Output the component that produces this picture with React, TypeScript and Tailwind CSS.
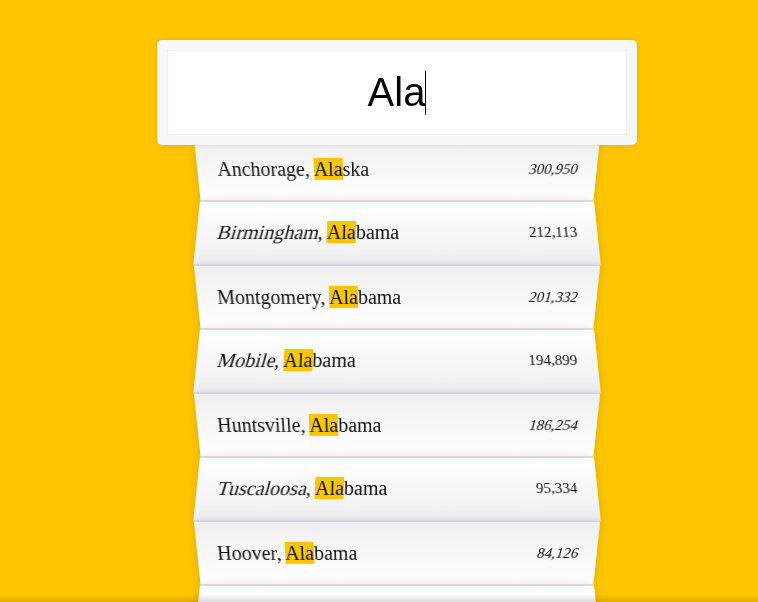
const cities = [
  { city: "Anchorage", state: "Alaska", pop: "300,950" },
  { city: "Birmingham", state: "Alabama", pop: "212,113" },
  { city: "Montgomery", state: "Alabama", pop: "201,332" },
  { city: "Mobile", state: "Alabama", pop: "194,899" },
  { city: "Huntsville", state: "Alabama", pop: "186,254" },
  { city: "Tuscaloosa", state: "Alabama", pop: "95,334" },
  { city: "Hoover", state: "Alabama", pop: "84,126" },
  { city: "Dothan", state: "Alabama", pop: "65,496" },
];

const query = "Ala";

function Highlighted({ text }: { text: string }) {
  const i = text.toLowerCase().indexOf(query.toLowerCase());
  if (i < 0) return <>{text}</>;
  return (
    <>
      {text.slice(0, i)}
      <span className="bg-[#ffc600]">{text.slice(i, i + query.length)}</span>
      {text.slice(i + query.length)}
    </>
  );
}

export default function App() {
  return (
    <div className="relative min-h-screen overflow-hidden bg-[#ffc600] pl-[36px] font-['Liberation_Serif',serif] text-[20px]">
      <form className="mx-auto max-w-[400px] pt-[30px]">
        <div className="relative top-[10px] left-[-10%] z-[2] flex w-[120%] items-center justify-center rounded-[5px] border-[10px] border-[#f7f7f7] bg-white p-5 font-['Liberation_Sans',Arial,sans-serif] text-[40px] leading-[45px] text-black shadow-[0_0_5px_rgba(0,0,0,0.12),inset_0_0_2px_rgba(0,0,0,0.19)]">
          <span>{query}</span>
          <span className="h-[44px] w-px bg-black" />
        </div>
        <ul className="relative m-0 list-none p-0">
          {cities.map((c, i) => {
            const odd = i % 2 === 0;
            return (
              <li
                key={c.city}
                className={
                  odd
                    ? "flex justify-between border-b border-[#d8d8d8] bg-linear-to-t from-white to-[#efefef] p-5 leading-[23px] text-[#111] shadow-[0_0_10px_rgba(0,0,0,0.14)] [transform:perspective(100px)_rotateX(-3deg)_translateY(3px)]"
                    : "flex justify-between border-b border-[#d8d8d8] bg-linear-to-b from-white to-[#efefef] p-5 leading-[23px] text-[#111] shadow-[0_0_10px_rgba(0,0,0,0.14)] [transform:perspective(100px)_rotateX(3deg)_translateY(2px)_scale(1.001)]"
                }
              >
                <span>
                  <span className={odd ? "" : "inline-block origin-[0_78%] [transform:skewX(-12deg)]"}>
                    <Highlighted text={c.city} />
                  </span>
                  , <Highlighted text={c.state} />
                </span>
                <span
                  className={
                    odd
                      ? "inline-block origin-[0_78%] self-start text-[15px] [transform:skewX(-12deg)]"
                      : "text-[15px]"
                  }
                >
                  {c.pop}
                </span>
              </li>
            );
          })}
        </ul>
      </form>
      <div className="pointer-events-none fixed inset-x-0 bottom-0 z-[3] h-[8px] bg-linear-to-b from-transparent to-[rgba(0,0,0,0.12)]" />
    </div>
  );
}
